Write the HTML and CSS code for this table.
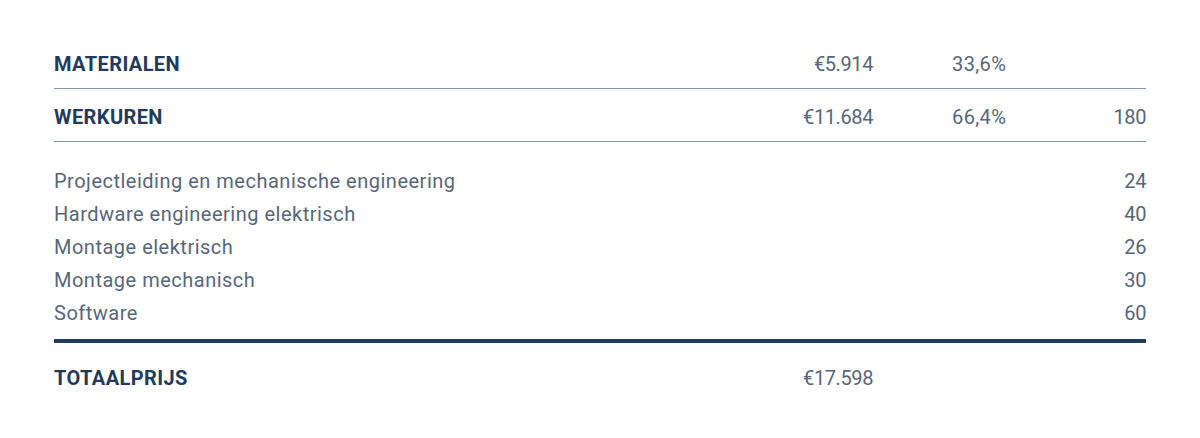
FILE: index.html
```html
<!DOCTYPE html>
<html lang="nl">
<head>
<meta charset="utf-8">
<title>Prijsopbouw</title>
<link rel="stylesheet" href="styles.css">
</head>
<body>
<div class="sheet">
  <div class="row head">
    <div class="label">MATERIALEN</div>
    <div class="amount">€5.914</div>
    <div class="pct">33,6%</div>
    <div class="hours"></div>
  </div>
  <div class="row head">
    <div class="label">WERKUREN</div>
    <div class="amount">€11.684</div>
    <div class="pct">66,4%</div>
    <div class="hours">180</div>
  </div>
  <div class="items">
    <div class="row item"><div class="label">Projectleiding en mechanische engineering</div><div class="amount"></div><div class="pct"></div><div class="hours">24</div></div>
    <div class="row item"><div class="label">Hardware engineering elektrisch</div><div class="amount"></div><div class="pct"></div><div class="hours">40</div></div>
    <div class="row item"><div class="label">Montage elektrisch</div><div class="amount"></div><div class="pct"></div><div class="hours">26</div></div>
    <div class="row item"><div class="label">Montage mechanisch</div><div class="amount"></div><div class="pct"></div><div class="hours">30</div></div>
    <div class="row item"><div class="label">Software</div><div class="amount"></div><div class="pct"></div><div class="hours">60</div></div>
  </div>
  <div class="row total">
    <div class="label">TOTAALPRIJS</div>
    <div class="amount">€17.598</div>
    <div class="pct"></div>
    <div class="hours"></div>
  </div>
</div>
</body>
</html>
```

FILE: styles.css
```css
html, body {
  margin: 0;
  padding: 0;
  background: #ffffff;
}
body {
  font-family: "Roboto", "Liberation Sans", sans-serif;
  color: #56677b;
}
.sheet {
  width: 1092px;
  margin-left: 54px;
  padding-top: 36px;
}
.row {
  display: grid;
  grid-template-columns: 1fr 100px 135px 138px;
  align-items: center;
  font-size: 20px;
  letter-spacing: 0.5px;
}
.row .amount {
  text-align: right;
  letter-spacing: -0.4px;
}
.row .pct {
  text-align: left;
  padding-left: 79px;
  letter-spacing: 0.4px;
}
.row .hours {
  text-align: right;
  letter-spacing: -0.4px;
}
.head {
  height: 48px;
  padding-top: 4px;
  border-bottom: 1.5px solid #8797a8;
}
.head .label, .total .label {
  font-weight: 700;
  color: #203b5b;
  letter-spacing: 0.4px;
}
.items {
  padding-top: 22px;
  padding-bottom: 10px;
  border-bottom: 4px solid #203b5b;
}
.item {
  height: 33px;
}
.total {
  height: 70px;
}
```
